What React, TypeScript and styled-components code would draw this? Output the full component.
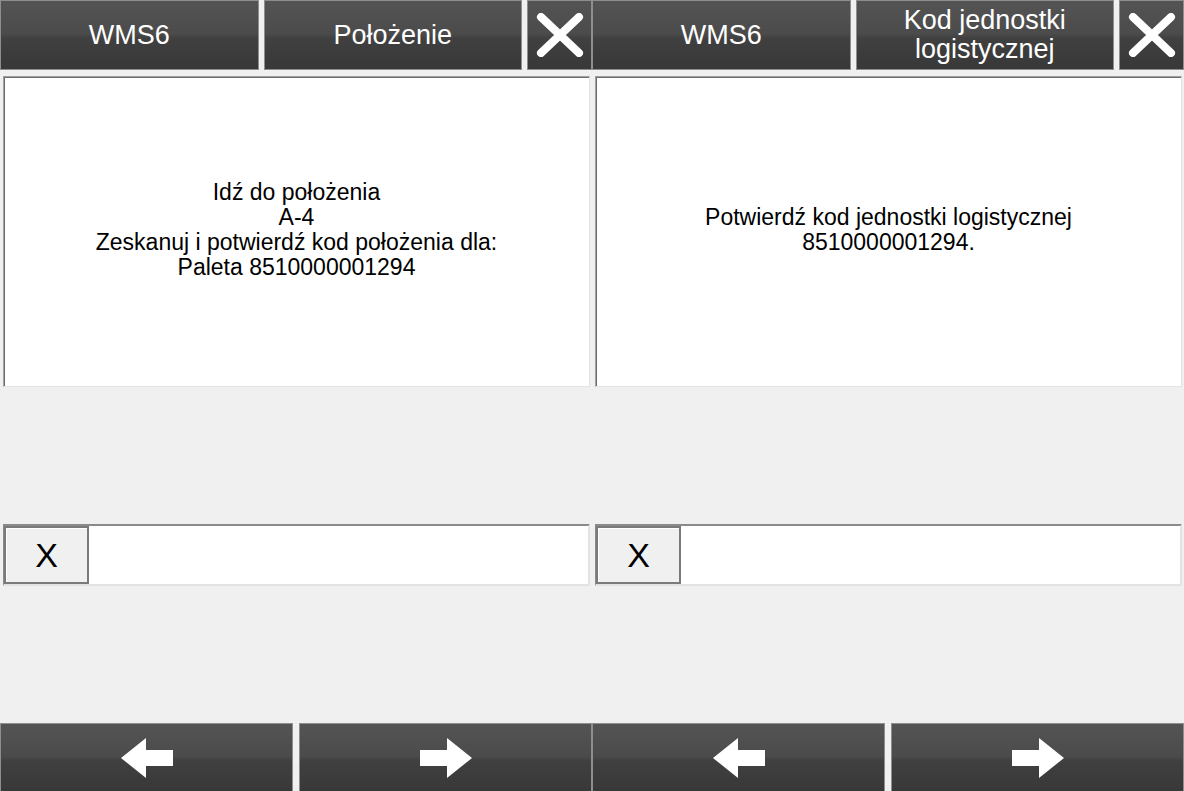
import React from "react";
import styled, { createGlobalStyle } from "styled-components";

const Global = createGlobalStyle`
  html, body {
    margin: 0;
    padding: 0;
    background: #f0f0f0;
    font-family: "Liberation Sans", Arial, sans-serif;
  }
`;

interface ScreenData {
  title: string;
  lines: string[];
}

const screens: ScreenData[] = [
  {
    title: "Położenie",
    lines: [
      "Idź do położenia",
      "A-4",
      "Zeskanuj i potwierdź kod położenia dla:",
      "Paleta 8510000001294",
    ],
  },
  {
    title: "Kod jednostki logistycznej",
    lines: ["Potwierdź kod jednostki logistycznej", "8510000001294."],
  },
];

function CloseIcon() {
  return (
    <svg width="48" height="44" viewBox="0 0 48 44">
      <path
        d="M5 4 L43 40 M43 4 L5 40"
        stroke="#fff"
        strokeWidth="8"
        strokeLinecap="round"
      />
    </svg>
  );
}

function Arrow({ dir }: { dir: "left" | "right" }) {
  return (
    <svg
      width="52"
      height="40"
      viewBox="0 0 52 40"
      style={dir === "right" ? { transform: "scaleX(-1)" } : undefined}
    >
      <path d="M0 20 L25 0 L25 12 L52 12 L52 28 L25 28 L25 40 Z" fill="#fff" />
    </svg>
  );
}

function Screen({ title, lines }: ScreenData) {
  return (
    <ScreenStyled>
      <Header>
        <HeaderButton>WMS6</HeaderButton>
        <HeaderButton>{title}</HeaderButton>
        <CloseButton>
          <CloseIcon />
        </CloseButton>
      </Header>
      <ContentBox>
        <Message>
          {lines.map((l) => (
            <div key={l}>{l}</div>
          ))}
        </Message>
      </ContentBox>
      <Spacer />
      <InputRow>
        <ClearButton>X</ClearButton>
        <Field />
      </InputRow>
      <Spacer />
      <Footer>
        <NavButton>
          <Arrow dir="left" />
        </NavButton>
        <NavButton>
          <Arrow dir="right" />
        </NavButton>
      </Footer>
    </ScreenStyled>
  );
}

export default function App() {
  return (
    <>
      <Global />
      <Screens>
        {screens.map((s) => (
          <Screen key={s.title} {...s} />
        ))}
      </Screens>
    </>
  );
}

const darkButton = `
  background: linear-gradient(
    to bottom,
    #545454 0%,
    #4b4b4b 48%,
    #404040 55%,
    #383838 100%
  );
  border: 1px solid #8e8e8e;
  box-sizing: border-box;
  color: #fff;
  display: flex;
  align-items: center;
  justify-content: center;
`;

const Screens = styled.div`
  display: flex;
  width: 1184px;
  height: 791px;
`;

const ScreenStyled = styled.div`
  width: 592px;
  height: 791px;
  display: flex;
  flex-direction: column;
  background: #f0f0f0;
`;

const Header = styled.div`
  display: flex;
  gap: 5px;
  height: 70px;
`;

const HeaderButton = styled.div`
  ${darkButton}
  flex: 1;
  font-size: 27px;
  line-height: 29px;
  text-align: center;
  padding: 0 20px;
`;

const CloseButton = styled.div`
  ${darkButton}
  width: 65px;
  flex: none;
`;

const ContentBox = styled.div`
  margin: 6px 2px 0 3px;
  height: 311px;
  box-sizing: border-box;
  background: #fff;
  border: 1px solid;
  border-color: #a0a0a0 #e3e3e3 #e3e3e3 #a0a0a0;
  box-shadow: inset 1px 1px 0 #6e6e6e;
  display: flex;
  align-items: center;
  justify-content: center;
`;

const Message = styled.div`
  font-size: 23px;
  line-height: 25px;
  color: #000;
  text-align: center;
  margin-top: -4px;
`;

const Spacer = styled.div`
  flex: 1;
`;

const InputRow = styled.div`
  margin: 0 2px 0 3px;
  height: 62px;
  box-sizing: border-box;
  display: flex;
  background: #fff;
  border-top: 2px solid #8a8a8a;
  border-left: 1px solid #8a8a8a;
  border-right: 2px solid #e3e3e3;
  border-bottom: 2px solid #e3e3e3;
`;

const ClearButton = styled.div`
  width: 85px;
  box-sizing: border-box;
  background: #f0f0f0;
  border: 2px solid #7a7a7a;
  box-shadow: inset 1px 1px 0 #fff;
  display: flex;
  align-items: center;
  justify-content: center;
  font-size: 34px;
  color: #000;
`;

const Field = styled.div`
  flex: 1;
  background: #fff;
`;

const Footer = styled.div`
  display: flex;
  gap: 6px;
  height: 68px;
`;

const NavButton = styled.div`
  ${darkButton}
  flex: 1;
  border-bottom: none;
`;
